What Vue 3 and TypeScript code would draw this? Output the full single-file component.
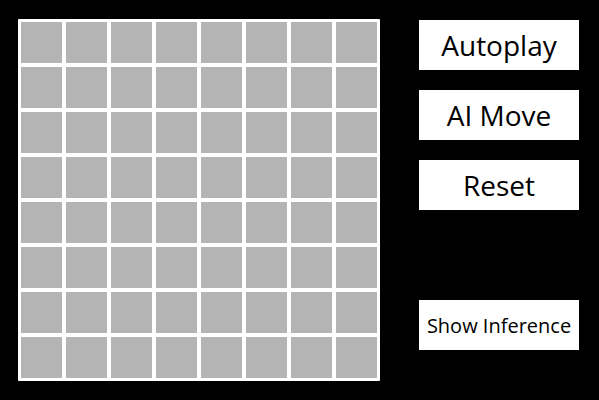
<script setup lang="ts">
import { ref } from 'vue'

interface Cell {
  id: number
  label: string
}

const SIZE = 8

const cells: Cell[] = Array.from({ length: SIZE * SIZE }, (_, i) => ({
  id: i,
  label: `Row ${Math.floor(i / SIZE) + 1}, column ${(i % SIZE) + 1}`,
}))

const actions: string[] = ['Autoplay', 'AI Move', 'Reset']
const showInference = ref<boolean>(false)
</script>

<template>
  <main class="game">
    <section class="board" aria-label="Board">
      <button
        v-for="cell in cells"
        :key="cell.id"
        type="button"
        class="cell"
        :aria-label="cell.label"
      ></button>
    </section>
    <nav class="controls" aria-label="Controls">
      <button v-for="action in actions" :key="action" type="button" class="control">
        {{ action }}
      </button>
      <button
        type="button"
        class="control inference"
        :aria-pressed="showInference"
        @click="showInference = !showInference"
      >
        Show Inference
      </button>
    </nav>
  </main>
</template>

<style>
body {
  margin: 0;
  background: #000;
}
</style>

<style scoped>
.game {
  box-sizing: border-box;
  min-height: 100vh;
  display: flex;
  align-items: flex-start;
  gap: 39px;
  padding: 19px 20px 19px 18px;
  background: #000;
  font-family: 'Open Sans', 'Noto Sans', sans-serif;
}

.board {
  box-sizing: border-box;
  flex: 1;
  min-width: 0;
  max-width: calc(100vh - 38px);
  display: grid;
  grid-template-columns: repeat(8, 1fr);
  gap: 4px;
  padding: 3px;
  background: #fff;
  border-radius: 1px;
}

.cell {
  aspect-ratio: 1;
  min-width: 0;
  margin: 0;
  padding: 0;
  border: 0;
  background: #b4b4b4;
}

.controls {
  flex: none;
  width: 160px;
  display: flex;
  flex-direction: column;
  gap: 20px;
  padding-top: 1px;
}

.control {
  height: 50px;
  margin: 0;
  padding: 0;
  border: 0;
  background: #fff;
  color: #000;
  font-family: inherit;
  font-size: 28px;
  line-height: normal;
  white-space: nowrap;
  cursor: pointer;
}

.inference {
  margin-top: 70px;
  font-size: 20px;
}
</style>
